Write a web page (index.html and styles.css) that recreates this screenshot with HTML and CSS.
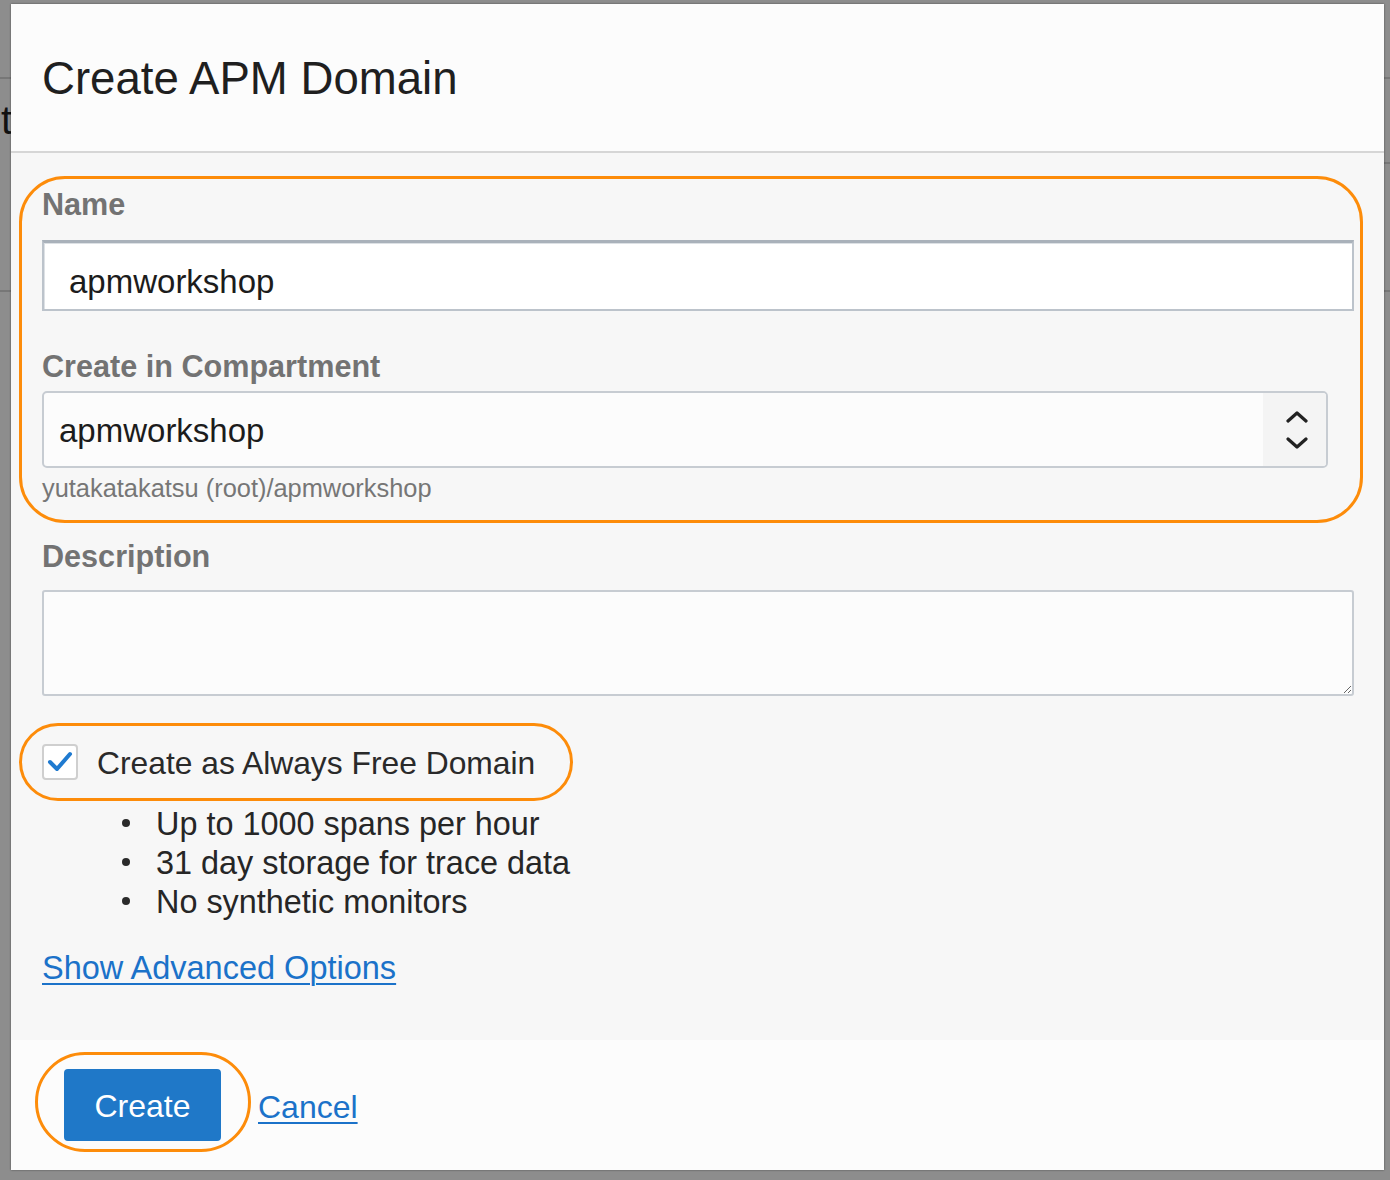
FILE: index.html
```html
<!DOCTYPE html>
<html lang="en">
<head>
<meta charset="utf-8">
<title>Create APM Domain</title>
<link rel="stylesheet" href="styles.css">
</head>
<body>
<div class="backdrop">
  <div class="bg-line bg-line-a"></div>
  <div class="bg-line bg-line-b"></div>
  <div class="bg-line bg-line-c"></div>
  <span class="bg-letter">t</span>
</div>

<div class="dialog">
  <header class="dialog-header">
    <h1 class="dialog-title">Create APM Domain</h1>
  </header>

  <main class="dialog-body">
    <div class="group annotated annotated-box">
      <div class="field-label">Name</div>
      <div class="text-input">apmworkshop</div>

      <div class="field-label label-compartment">Create in Compartment</div>
      <div class="select">
        <span class="select-value">apmworkshop</span>
        <span class="select-toggle">
          <svg width="24" height="38" viewBox="0 0 24 38" aria-hidden="true">
            <path d="M3 10 L12 2 L21 10" fill="none" stroke="#222" stroke-width="3.2" stroke-linecap="round" stroke-linejoin="round"/>
            <path d="M3 28 L12 36 L21 28" fill="none" stroke="#222" stroke-width="3.2" stroke-linecap="round" stroke-linejoin="round"/>
          </svg>
        </span>
      </div>
      <div class="helper">yutakatakatsu (root)/apmworkshop</div>
    </div>

    <div class="field-label label-description">Description</div>
    <textarea class="textarea" aria-label="Description"></textarea>

    <div class="check-row annotated annotated-oval">
      <span class="checkbox">
        <svg width="28" height="24" viewBox="0 0 28 24" aria-hidden="true">
          <path d="M4 12 L11 19 L24 4" fill="none" stroke="#1f7ad0" stroke-width="4" stroke-linecap="round" stroke-linejoin="round"/>
        </svg>
      </span>
      <span class="check-label">Create as Always Free Domain</span>
    </div>

    <ul class="bullets">
      <li>Up to 1000 spans per hour</li>
      <li>31 day storage for trace data</li>
      <li>No synthetic monitors</li>
    </ul>

    <a class="link advanced" href="#">Show Advanced Options</a>
  </main>

  <footer class="dialog-footer">
    <span class="annotated annotated-button">
      <button class="btn-primary" type="button">Create</button>
    </span>
    <a class="link cancel" href="#">Cancel</a>
  </footer>
</div>
</body>
</html>
```

FILE: styles.css
```css
* {
  box-sizing: border-box;
}

html, body {
  margin: 0;
  padding: 0;
}

body {
  width: 1390px;
  height: 1180px;
  background: #8d8d8d;
  font-family: "Liberation Sans", Arial, Helvetica, sans-serif;
  position: relative;
  overflow: hidden;
}

/* backdrop page seen behind the modal */
.backdrop {
  position: absolute;
  inset: 0;
}

.bg-line {
  position: absolute;
  left: 0;
  right: 0;
  height: 2px;
  background: #777;
}

.bg-line-a { top: 77px; }
.bg-line-b { top: 162px; left: 1380px; }
.bg-line-c { top: 290px; }

.bg-letter {
  position: absolute;
  left: 1px;
  top: 98px;
  font-size: 40px;
  line-height: 44px;
  color: #111;
}

/* dialog */
.dialog {
  position: absolute;
  left: 11px;
  top: 4px;
  width: 1373px;
  height: 1166px;
  display: flex;
  flex-direction: column;
  background: #fcfcfc;
  box-shadow: 0 0 2px rgba(0, 0, 0, 0.45);
}

.dialog-header {
  height: 149px;
  flex: none;
  display: flex;
  align-items: center;
  padding: 0 31px;
  background: #fcfcfc;
  border-bottom: 2px solid #d6d6d6;
}

.dialog-title {
  margin: 0;
  font-size: 45.6px;
  font-weight: normal;
  color: #1f1f1f;
  line-height: 52px;
  padding-top: 2px;
}

.dialog-body {
  flex: 1;
  background: #f7f7f7;
  padding: 33px 30px 0 31px;
  display: flex;
  flex-direction: column;
  align-items: flex-start;
}

.group {
  align-self: stretch;
}

.field-label {
  font-size: 30.6px;
  line-height: 36px;
  font-weight: bold;
  color: #737373;
}

.text-input {
  margin-top: 18px;
  height: 71px;
  padding: 11px 0 0 25px;
  display: flex;
  align-items: center;
  font-size: 33px;
  color: #1c1c1c;
  background: #ffffff;
  border: 2px solid #bcc3cb;
  border-top: 3px solid #a9b1ba;
  box-shadow: inset 1px 1px 0 #dde1e5;
}

.label-compartment {
  margin-top: 37px;
}

.select {
  margin-top: 7px;
  width: 1286px;
  height: 77px;
  display: flex;
  align-items: stretch;
  background: #fcfcfc;
  border: 2px solid #c7ccd2;
  border-radius: 5px;
  overflow: hidden;
}

.select-value {
  flex: 1;
  display: flex;
  align-items: center;
  padding-left: 15px;
  padding-top: 3px;
  font-size: 33px;
  color: #1c1c1c;
}

.select-toggle {
  width: 63px;
  display: flex;
  align-items: center;
  justify-content: center;
  background: #f4f4f4;
  padding-left: 4px;
}

.helper {
  margin-top: 5px;
  font-size: 25.4px;
  line-height: 30px;
  color: #767676;
}

.label-description {
  margin-top: 35px;
}

.textarea {
  margin-top: 16px;
  align-self: stretch;
  height: 106px;
  display: block;
  background: #fcfcfc;
  border: 2px solid #c7ccd2;
  border-radius: 3px;
  resize: vertical;
  font-family: inherit;
}

/* annotations drawn over the screenshot */
.annotated {
  position: relative;
}

.annotated::after {
  content: "";
  position: absolute;
  border: 3px solid #fd8c0a;
  pointer-events: none;
}

.annotated-box::after {
  top: -10px;
  left: -23px;
  right: -9px;
  bottom: -20px;
  border-radius: 46px;
}

.check-row {
  margin-top: 48px;
  height: 36px;
  display: inline-flex;
  align-items: center;
}

.annotated-oval::after {
  top: -21px;
  bottom: -21px;
  left: -23px;
  right: -38px;
  border-radius: 40px;
}

.checkbox {
  width: 36px;
  height: 36px;
  display: flex;
  align-items: center;
  justify-content: center;
  background: #ffffff;
  border: 2px solid #cfcfcf;
  border-radius: 4px;
}

.check-label {
  margin-left: 19px;
  font-size: 31.8px;
  color: #2a2a2a;
  padding-top: 2px;
}

.bullets {
  margin: 25px 0 0 0;
  padding: 0 0 0 114px;
  list-style: none;
  font-size: 32.4px;
  line-height: 39px;
  color: #262626;
}

.bullets li::before {
  content: "";
  display: inline-block;
  width: 8px;
  height: 8px;
  border-radius: 50%;
  background: #2a2a2a;
  margin-left: -34px;
  margin-right: 26px;
  vertical-align: 8px;
}

.link {
  color: #1b72c9;
  text-decoration: underline;
  text-decoration-thickness: 2px;
  text-underline-offset: 4px;
}

.advanced {
  margin-top: 27px;
  font-size: 32.5px;
  line-height: 39px;
}

.dialog-footer {
  height: 130px;
  flex: none;
  display: flex;
  align-items: center;
  padding-left: 53px;
  background: #fcfcfc;
}

.annotated-button {
  display: inline-flex;
}

.annotated-button::after {
  top: -17px;
  bottom: -11px;
  left: -29px;
  right: -30px;
  border-radius: 50px;
}

.btn-primary {
  width: 157px;
  height: 72px;
  border: none;
  border-radius: 4px;
  background: #1f78c8;
  color: #ffffff;
  font-family: inherit;
  font-size: 32px;
  padding: 2px 0 0 0;
}

.cancel {
  margin-left: 37px;
  font-size: 32px;
  padding-top: 4px;
}
```
